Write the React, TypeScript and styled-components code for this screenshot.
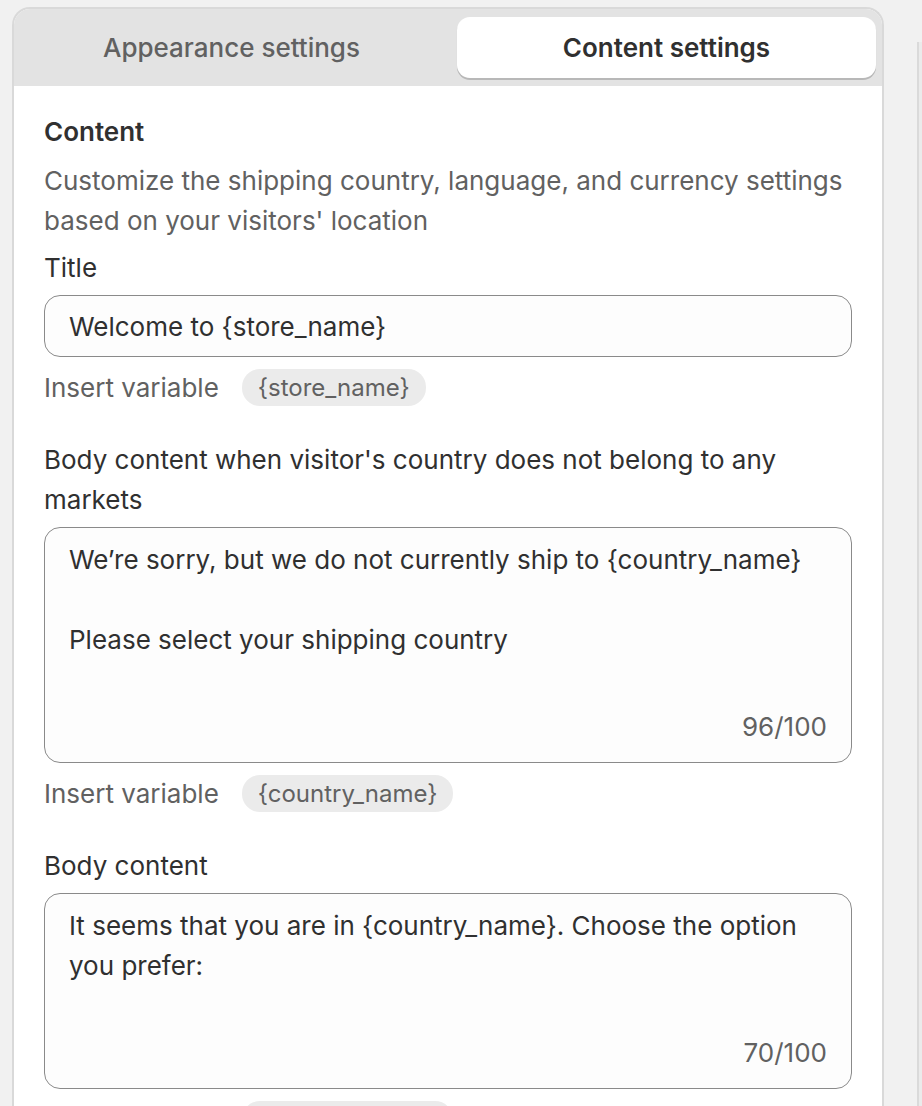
import React from 'react'
import styled, { createGlobalStyle } from 'styled-components'

const GlobalStyle = createGlobalStyle`
  html, body {
    margin: 0;
    padding: 0;
    background: #f1f1f1;
    font-family: Inter, 'Noto Sans', 'Liberation Sans', sans-serif;
    color: #303030;
  }
`

const Page = styled.div`
  display: flex;
  align-items: flex-start;
  height: 1106px;
  overflow: hidden;
  padding: 7px 0 0 12px;
  box-sizing: border-box;
`

const Card = styled.div`
  width: 872px;
  flex-shrink: 0;
  background: #ffffff;
  border: 2px solid #d9d9d9;
  border-bottom: none;
  border-radius: 18px 18px 0 0;
  box-sizing: border-box;
  min-height: 1200px;
`

const SidePanel = styled.div`
  margin: 35px 0 0 33px;
  flex: 1;
  height: 1100px;
  background: #ebebeb;
  border-left: 2px solid #dadada;
`

const TabBar = styled.div`
  display: grid;
  grid-template-columns: 1fr 1fr;
  gap: 16px;
  padding: 8px 6px 8px 8px;
  background: #e3e3e3;
  border-radius: 16px 16px 0 0;
`

const Tab = styled.button<{ $active?: boolean }>`
  height: 61px;
  border: none;
  border-radius: 13px;
  font-family: inherit;
  font-size: 26px;
  font-weight: ${p => (p.$active ? 600 : 500)};
  color: ${p => (p.$active ? '#303030' : '#616161')};
  background: ${p => (p.$active ? '#ffffff' : 'transparent')};
  box-shadow: ${p => (p.$active ? '0 2px 0 0 #b8b8b8, 0 1px 1px 0 rgba(0,0,0,0.08)' : 'none')};
  cursor: pointer;
`

const Body = styled.div`
  padding: 26px 30px 0 30px;
  display: flex;
  flex-direction: column;
`

const Heading = styled.h2`
  margin: 0 0 9px;
  font-size: 26px;
  line-height: 40px;
  font-weight: 600;
  color: #303030;
`

const Description = styled.p`
  margin: 0 0 7px;
  font-size: 26px;
  line-height: 40px;
  color: #616161;
`

const Field = styled.div`
  display: flex;
  flex-direction: column;
  margin-bottom: 34px;
`

const Label = styled.label`
  font-size: 26px;
  line-height: 40px;
  color: #303030;
  margin-bottom: 7px;
`

const TextInput = styled.input`
  height: 62px;
  box-sizing: border-box;
  padding: 0 24px;
  border: 1px solid #8a8a8a;
  border-radius: 16px;
  background: #fdfdfd;
  font-family: inherit;
  font-size: 26px;
  color: #303030;
  outline: none;
`

const AreaBox = styled.div`
  display: flex;
  flex-direction: column;
  border: 1px solid #8a8a8a;
  border-radius: 16px;
  background: #fdfdfd;
  padding: 12px 24px 15px;
`

const Area = styled.textarea<{ $lines: number }>`
  height: ${p => p.$lines * 40 + 7}px;
  border: none;
  padding: 0;
  resize: none;
  background: transparent;
  font-family: inherit;
  font-size: 26px;
  line-height: 40px;
  color: #303030;
  outline: none;
`

const Counter = styled.div`
  align-self: flex-end;
  font-size: 26px;
  line-height: 40px;
  color: #616161;
`

const VariableRow = styled.div`
  display: flex;
  align-items: center;
  gap: 23px;
  margin-top: 12px;
  font-size: 26px;
  color: #616161;
`

const Pill = styled.button`
  height: 37px;
  padding: 0 16px;
  border: none;
  border-radius: 18px;
  background: #ebebeb;
  font-family: inherit;
  font-size: 24px;
  color: #616161;
  cursor: pointer;
`

export default function App() {
  return (
    <>
      <GlobalStyle />
      <Page>
        <Card>
          <TabBar>
            <Tab>Appearance settings</Tab>
            <Tab $active>Content settings</Tab>
          </TabBar>
          <Body>
            <Heading>Content</Heading>
            <Description>
              Customize the shipping country, language, and currency settings based on your visitors' location
            </Description>
            <Field>
              <Label>Title</Label>
              <TextInput defaultValue="Welcome to {store_name}" />
              <VariableRow>
                Insert variable
                <Pill>{'{store_name}'}</Pill>
              </VariableRow>
            </Field>
            <Field>
              <Label>Body content when visitor's country does not belong to any markets</Label>
              <AreaBox>
                <Area
                  $lines={4}
                  defaultValue={'We\u2019re sorry, but we do not currently ship to {country_name}\n\nPlease select your shipping country'}
                />
                <Counter>96/100</Counter>
              </AreaBox>
              <VariableRow>
                Insert variable
                <Pill>{'{country_name}'}</Pill>
              </VariableRow>
            </Field>
            <Field>
              <Label>Body content</Label>
              <AreaBox>
                <Area
                  $lines={3}
                  defaultValue="It seems that you are in {country_name}. Choose the option you prefer:"
                />
                <Counter>70/100</Counter>
              </AreaBox>
              <VariableRow>
                Insert variable
                <Pill>{'{country_name}'}</Pill>
              </VariableRow>
            </Field>
          </Body>
        </Card>
        <SidePanel />
      </Page>
    </>
  )
}
